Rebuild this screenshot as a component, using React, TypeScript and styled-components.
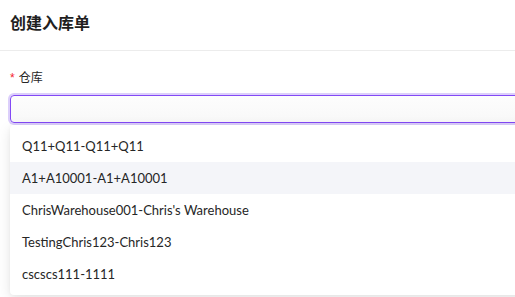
import styled, { createGlobalStyle } from 'styled-components'

const GlobalStyle = createGlobalStyle`
  html, body {
    margin: 0;
    padding: 0;
    background: #ffffff;
    overflow: hidden;
  }
  body {
    font-family: Lato, "Noto Sans CJK SC", sans-serif;
    color: #262626;
  }
`

const warehouses = [
  'Q11+Q11-Q11+Q11',
  'A1+A10001-A1+A10001',
  "ChrisWarehouse001-Chris's Warehouse",
  'TestingChris123-Chris123',
  'cscscs111-1111',
]

export default function App() {
  return (
    <Page>
      <GlobalStyle />
      <Header>
        <Title>创建入库单</Title>
      </Header>
      <Form>
        <Label>
          <Required>*</Required>仓库
        </Label>
        <Input />
        <Dropdown>
          {warehouses.map((w, i) => (
            <Option key={w} $active={i === 1}>
              {w}
            </Option>
          ))}
        </Dropdown>
      </Form>
    </Page>
  )
}

const Page = styled.div`
  width: 515px;
  height: 297px;
  overflow: hidden;
`

const Header = styled.div`
  height: 51px;
  display: flex;
  align-items: center;
  padding: 0 10px;
  border-bottom: 1px solid #ececec;
  box-sizing: border-box;
`

const Title = styled.h2`
  margin: 0;
  font-family: "Noto Sans CJK SC", sans-serif;
  font-size: 16px;
  font-weight: 600;
  color: #1f1f1f;
  margin-top: -6px;
`

const Form = styled.div`
  padding: 17px 0 0 10px;
  display: flex;
  flex-direction: column;
`

const Label = styled.div`
  font-family: "Noto Sans CJK SC", sans-serif;
  font-size: 12px;
  line-height: 18px;
  color: #262626;
  margin-bottom: 8px;
`

const Required = styled.span`
  color: #f5222d;
  margin-right: 4px;
  font-family: "Liberation Sans", sans-serif;
`

const Input = styled.div`
  height: 28px;
  width: 540px;
  box-sizing: border-box;
  border: 1px solid #8349f5;
  border-radius: 4px;
  background: linear-gradient(#fdfdfd, #f8f8f8);
  box-shadow: 0 0 0 2px #dccffb;
`

const Dropdown = styled.div`
  margin-top: 2px;
  width: 540px;
  background: #ffffff;
  padding: 5px 0;
  border-radius: 4px;
  box-shadow: 0 4px 14px rgba(0, 0, 0, 0.1), 0 1px 4px rgba(0, 0, 0, 0.04);
`

const Option = styled.div<{ $active: boolean }>`
  height: 32px;
  line-height: 32px;
  padding: 0 12px;
  font-size: 13px;
  color: #262626;
  background: ${({ $active }) => ($active ? '#f4f5f9' : 'transparent')};
`
